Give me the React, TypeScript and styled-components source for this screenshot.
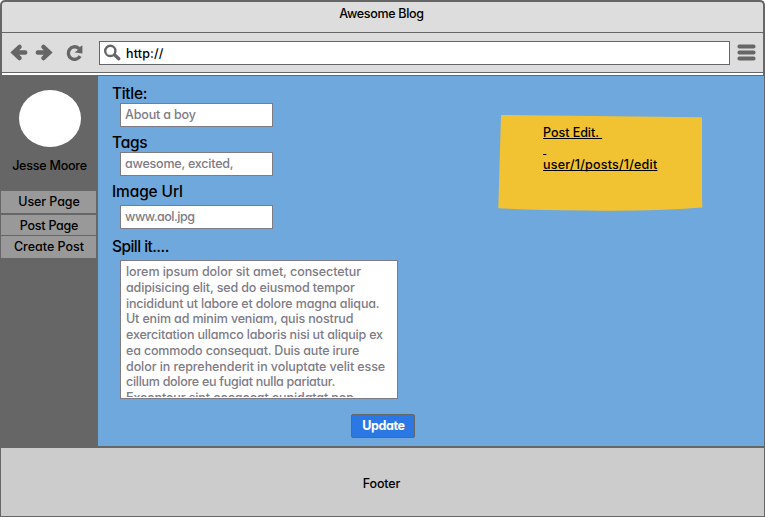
import React from "react";
import styled, { createGlobalStyle } from "styled-components";

const GlobalStyle = createGlobalStyle`
  *, *::before, *::after { box-sizing: border-box; }
  body { margin: 0; background: #fff; }
`;

const Window = styled.div`
  width: 765px;
  height: 517px;
  overflow: hidden;
  display: flex;
  flex-direction: column;
  color: #000;
  font: 500 12.5px/18px Inter, "Liberation Sans", sans-serif;
  font-feature-settings: "cv11";
`;

const Chrome = styled.header`
  flex: none;
  height: 75px;
  border: 2px solid #666;
  border-bottom: 0;
  border-radius: 5px 5px 0 0;
  overflow: hidden;
  background: #ddd;
`;

const TitleBar = styled.div`
  height: 31px;
  padding: 3px 2px 0 0;
  border-bottom: 1px solid #666;
  text-align: center;
`;

const Toolbar = styled.div`
  display: flex;
  align-items: center;
  height: 40px;
  padding-left: 9px;
  border-bottom: 1px solid #666;
`;

const Gap = styled.span<{ $w: number }>`
  flex: none;
  width: ${(p) => p.$w}px;
`;

const Icon = styled.svg`
  flex: none;
  display: block;
  overflow: visible;
`;

const Address = styled.div`
  display: flex;
  align-items: center;
  width: 631px;
  height: 24px;
  padding-left: 4px;
  gap: 5px;
  border: 1px solid #666;
  background: #fff;
`;

const Url = styled.div`
  padding-top: 2px;
  letter-spacing: 0.15px;
`;

const Seam = styled.div`
  height: 2px;
  background: #fff;
`;

const Body = styled.div`
  flex: none;
  display: flex;
  height: 373px;
  border: solid #666;
  border-width: 1px 1px 2px 0;
  background: #6fa8dc;
`;

const Sidebar = styled.aside`
  flex: none;
  width: 98px;
  padding: 14px 2px 0 1px;
  background: #666;
  text-align: center;
`;

const Avatar = styled.div`
  width: 62px;
  height: 57px;
  margin: 0 auto 10px 18px;
  border-radius: 50%;
  background: #fff;
`;

const UserName = styled.div`
  height: 16px;
  margin-bottom: 18px;
  padding-left: 2px;
`;

const NavItem = styled.a<{ $gap: number; $h: number; $top: number }>`
  display: block;
  height: ${(p) => p.$h}px;
  margin-bottom: ${(p) => p.$gap}px;
  padding-top: ${(p) => p.$top}px;
  padding-left: 1px;
  background: #999;
`;

const Main = styled.main`
  flex: 1;
  display: flex;
  align-items: flex-start;
`;

const Form = styled.form`
  width: 400px;
  padding: 7px 0 0 14px;
`;

const Label = styled.label<{ $h: number }>`
  display: block;
  height: ${(p) => p.$h}px;
  font-size: 15.5px;
  line-height: 22px;
`;

const Field = styled.div<{ $after: number }>`
  width: 153px;
  height: 24px;
  margin: 0 0 ${(p) => p.$after}px 8px;
  padding: 2px 0 0 4px;
  border: 1px solid #7f7b86;
  background: #fff;
  color: #7d7b86;
`;

const TextArea = styled.div`
  width: 278px;
  height: 139px;
  margin-left: 8px;
  padding: 3px 0 0 5px;
  border: 1px solid #7f7b86;
  background: #fff;
  color: #7d7b86;
  line-height: 15.75px;
  white-space: nowrap;
  overflow: hidden;
`;

const Clip = styled.div`
  height: 133px;
  overflow: hidden;
`;

const Line = styled.div``;

const Submit = styled.button`
  display: block;
  width: 64px;
  height: 24px;
  margin: 15px 0 0 239px;
  padding: 0 0 1px 1px;
  border: 1px solid #666;
  border-radius: 2px;
  background: #2b78e4;
  color: #fff;
  font: 700 12.5px/16px Inter, sans-serif;
  font-feature-settings: inherit;
`;

const Note = styled.div`
  display: grid;
  width: 204px;
  height: 97px;
  margin: 38px 0 0 0;

  & > * { grid-area: 1 / 1; }
`;

const NoteText = styled.div`
  padding: 11px 0 0 45px;
  line-height: 16px;
  white-space: pre;
  text-decoration: underline;
  text-decoration-thickness: 1px;
  text-underline-offset: 1px;
  text-decoration-skip-ink: none;
`;

const Footer = styled.footer`
  flex: none;
  height: 69px;
  padding: 27px 2px 0 0;
  border: 1px solid #666;
  border-top: 0;
  background: #ccc;
  text-align: center;
`;

const Track = styled.span<{ $s: number }>`
  letter-spacing: ${(p) => p.$s}px;
`;

const navItems = [
  { text: "User Page", s: -0.1, h: 22, gap: 2, top: 2 },
  { text: "Post Page", s: -0.25, h: 20, gap: 1, top: 2 },
  { text: "Create Post", s: 0, h: 22, gap: 0, top: 2 },
];

const fields = [
  { label: "Title:", ls: -0.33, h: 20, value: "About a boy", vs: -0.16, after: 5 },
  { label: "Tags", ls: -0.25, h: 20, value: "awesome, excited,", vs: -0.22, after: 5 },
  { label: "Image Url", ls: -0.14, h: 24, value: "www.aol.jpg", vs: -0.48, after: 7 },
];

const lines: [string, number][] = [
  ["lorem ipsum dolor sit amet, consectetur", -0.06],
  ["adipisicing elit, sed do eiusmod tempor", -0.14],
  ["incididunt ut labore et dolore magna aliqua.", -0.17],
  ["Ut enim ad minim veniam, quis nostrud", -0.15],
  ["exercitation ullamco laboris nisi ut aliquip ex", -0.18],
  ["ea commodo consequat. Duis aute irure", -0.17],
  ["dolor in reprehenderit in voluptate velit esse", -0.08],
  ["cillum dolore eu fugiat nulla pariatur.", -0.28],
  ["Excepteur sint occaecat cupidatat non", -0.1],
];

const ARROW = "M14.2 7.5H4M8.6 1.9L2.6 7.5L8.6 13.1";

export default function App() {
  return (
    <>
      <GlobalStyle />
      <Window>
        <Chrome>
          <TitleBar><Track $s={-0.3}>Awesome Blog</Track></TitleBar>
          <Toolbar>
            <Icon width="16" height="15" viewBox="0 0 16 15" fill="none" stroke="#666" strokeWidth="4.4" strokeLinecap="round" strokeLinejoin="miter">
              <path d={ARROW} />
            </Icon>
            <Gap $w={9} />
            <Icon width="16" height="15" viewBox="0 0 16 15" fill="none" stroke="#666" strokeWidth="4.4" strokeLinecap="round">
              <path d={ARROW} transform="matrix(-1 0 0 1 16 0)" />
            </Icon>
            <Gap $w={14} />
            <Icon width="17" height="16" viewBox="0 0 17 16">
              <path d="M14.1 11.2A6.3 6.3 0 1 1 12.6 3.2" fill="none" stroke="#666" strokeWidth="3.4" />
              <path d="M16.4 0.6V8.6L8.6 7.4L11.2 5.6L12.6 2.6Z" fill="#666" />
            </Icon>
            <Gap $w={16} />
            <Address>
              <Icon width="17" height="16" viewBox="0 0 17 16" fill="none" stroke="#666" strokeLinecap="round">
                <circle cx="6.3" cy="5.9" r="5.1" strokeWidth="2.4" />
                <path d="M10.7 10L14.8 13.7" strokeWidth="3.4" />
              </Icon>
              <Url>http://</Url>
            </Address>
            <Gap $w={7} />
            <Icon width="19" height="17" viewBox="0 0 19 17" fill="#666">
              <rect x="0.5" y="0.5" width="18" height="4" rx="1.8" />
              <rect x="0.5" y="6.5" width="18" height="4" rx="1.8" />
              <rect x="0.5" y="12.5" width="18" height="4" rx="1.8" />
            </Icon>
          </Toolbar>
          <Seam />
        </Chrome>
        <Body>
          <Sidebar>
            <Avatar />
            <UserName><Track $s={-0.22}>Jesse Moore</Track></UserName>
            {navItems.map((n) => (
              <NavItem key={n.text} $gap={n.gap} $h={n.h} $top={n.top}>
                <Track $s={n.s}>{n.text}</Track>
              </NavItem>
            ))}
          </Sidebar>
          <Main>
            <Form>
              {fields.map((f) => (
                <React.Fragment key={f.label}>
                  <Label $h={f.h}><Track $s={f.ls}>{f.label}</Track></Label>
                  <Field $after={f.after}><Track $s={f.vs}>{f.value}</Track></Field>
                </React.Fragment>
              ))}
              <Label $h={24}><Track $s={-0.55}>Spill it....</Track></Label>
              <TextArea>
                <Clip>
                  {lines.map(([text, s]) => (
                    <Line key={text}><Track $s={s}>{text}</Track></Line>
                  ))}
                </Clip>
              </TextArea>
              <Submit type="button"><Track $s={-0.4}>Update</Track></Submit>
            </Form>
            <Note>
              <Icon width="204" height="97" viewBox="0 0 204 97">
                <path d="M3 1L204 3.3V83L204.3 93.5Q150 97.5 90 96.5Q35 96 0.3 94.2Z" fill="#f1c232" />
              </Icon>
              <NoteText>
                <Track $s={-0.03}>{"Post Edit. "}</Track>{"\n \n"}
                <Track $s={0.22}>user/1/posts/1/edit</Track>
              </NoteText>
            </Note>
          </Main>
        </Body>
        <Footer><Track $s={-0.12}>Footer</Track></Footer>
      </Window>
    </>
  );
}
